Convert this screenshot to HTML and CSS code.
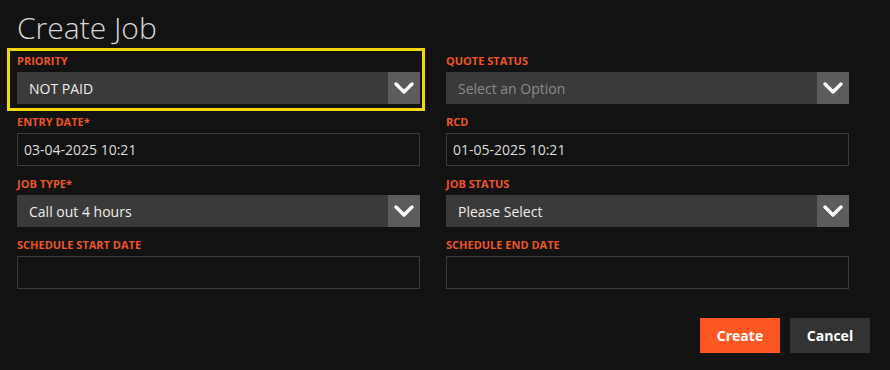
FILE: index.html
```html
<!DOCTYPE html>
<html lang="en">
<head>
    <meta charset="UTF-8">
    <meta name="viewport" content="width=device-width, initial-scale=1.0">
    <title>Create Job</title>
    <link rel="stylesheet" href="styles.css">
</head>
<body>
    <div class="job-form">
        <h1>Create Job</h1>
        <div class="fields">
            <div class="field-group is-focused">
                <div class="highlight"></div>
                <label class="field-label">PRIORITY</label>
                <div class="select-box">
                    <span class="select-value">NOT PAID</span>
                    <span class="select-arrow">
                        <svg width="32" height="32" viewBox="0 0 32 32"><polyline points="8,12 16,20 24,12" fill="none" stroke="#fff" stroke-width="3.5" stroke-linecap="round" stroke-linejoin="round"/></svg>
                    </span>
                </div>
            </div>
            <div class="field-group">
                <label class="field-label">QUOTE STATUS</label>
                <div class="select-box">
                    <span class="select-value placeholder">Select an Option</span>
                    <span class="select-arrow">
                        <svg width="32" height="32" viewBox="0 0 32 32"><polyline points="8,12 16,20 24,12" fill="none" stroke="#fff" stroke-width="3.5" stroke-linecap="round" stroke-linejoin="round"/></svg>
                    </span>
                </div>
            </div>
            <div class="field-group">
                <label class="field-label">ENTRY DATE*</label>
                <input class="text-input" type="text" value="03-04-2025 10:21">
            </div>
            <div class="field-group">
                <label class="field-label">RCD</label>
                <input class="text-input" type="text" value="01-05-2025 10:21">
            </div>
            <div class="field-group">
                <label class="field-label">JOB TYPE*</label>
                <div class="select-box">
                    <span class="select-value">Call out 4 hours</span>
                    <span class="select-arrow">
                        <svg width="32" height="32" viewBox="0 0 32 32"><polyline points="8,12 16,20 24,12" fill="none" stroke="#fff" stroke-width="3.5" stroke-linecap="round" stroke-linejoin="round"/></svg>
                    </span>
                </div>
            </div>
            <div class="field-group">
                <label class="field-label">JOB STATUS</label>
                <div class="select-box">
                    <span class="select-value">Please Select</span>
                    <span class="select-arrow">
                        <svg width="32" height="32" viewBox="0 0 32 32"><polyline points="8,12 16,20 24,12" fill="none" stroke="#fff" stroke-width="3.5" stroke-linecap="round" stroke-linejoin="round"/></svg>
                    </span>
                </div>
            </div>
            <div class="field-group">
                <label class="field-label">SCHEDULE START DATE</label>
                <input class="text-input" type="text" value="">
            </div>
            <div class="field-group">
                <label class="field-label">SCHEDULE END DATE</label>
                <input class="text-input" type="text" value="">
            </div>
        </div>
        <div class="actions">
            <button class="btn btn-create">Create</button>
            <button class="btn btn-cancel">Cancel</button>
        </div>
    </div>
</body>
</html>
```

FILE: styles.css
```css
body {
    margin: 0;
    background-color: #121212;
    font-family: 'Open Sans', 'Noto Sans', sans-serif;
}

.job-form {
    padding: 10px 0 0 17px;
}

h1 {
    margin: 0 0 8px;
    font-size: 30px;
    line-height: 36px;
    font-weight: 300;
    color: #d6d6d6;
}

.fields {
    display: grid;
    grid-template-columns: 403px 403px;
    column-gap: 26px;
    row-gap: 11px;
}

.field-group {
    position: relative;
}

.field-label {
    display: block;
    font-size: 11px;
    line-height: 14px;
    font-weight: 700;
    color: #ee5427;
    margin-bottom: 4px;
}

/* yellow focus frame around the active group */
.highlight {
    position: absolute;
    top: -6px;
    left: -10px;
    right: -5px;
    bottom: -7px;
    border: 3px solid #f2d800;
    pointer-events: none;
}

.select-box {
    display: flex;
    align-items: center;
    height: 32px;
    background-color: #3a3a3a;
}

.select-value {
    flex: 1;
    padding-left: 12px;
    font-size: 14px;
    color: #eeeeee;
}

.select-value.placeholder {
    color: #8a8a8a;
}

.select-arrow {
    width: 32px;
    height: 32px;
    background-color: #5c5c5c;
}

.select-arrow svg {
    display: block;
}

.text-input {
    display: block;
    box-sizing: border-box;
    width: 100%;
    height: 33px;
    margin: 0;
    padding: 0 6px;
    background-color: #121212;
    border: 1px solid #3b3b3b;
    font-family: inherit;
    font-size: 14px;
    color: #dddddd;
    outline: none;
}

.actions {
    display: flex;
    justify-content: flex-end;
    gap: 10px;
    padding: 29px 20px 0 0;
}

.btn {
    width: 80px;
    height: 35px;
    border: none;
    font-family: inherit;
    font-size: 14px;
    font-weight: 700;
    color: #ffffff;
    cursor: pointer;
}

.btn-create {
    background-color: #ff5722;
}

.btn-cancel {
    background-color: #333333;
}
```
